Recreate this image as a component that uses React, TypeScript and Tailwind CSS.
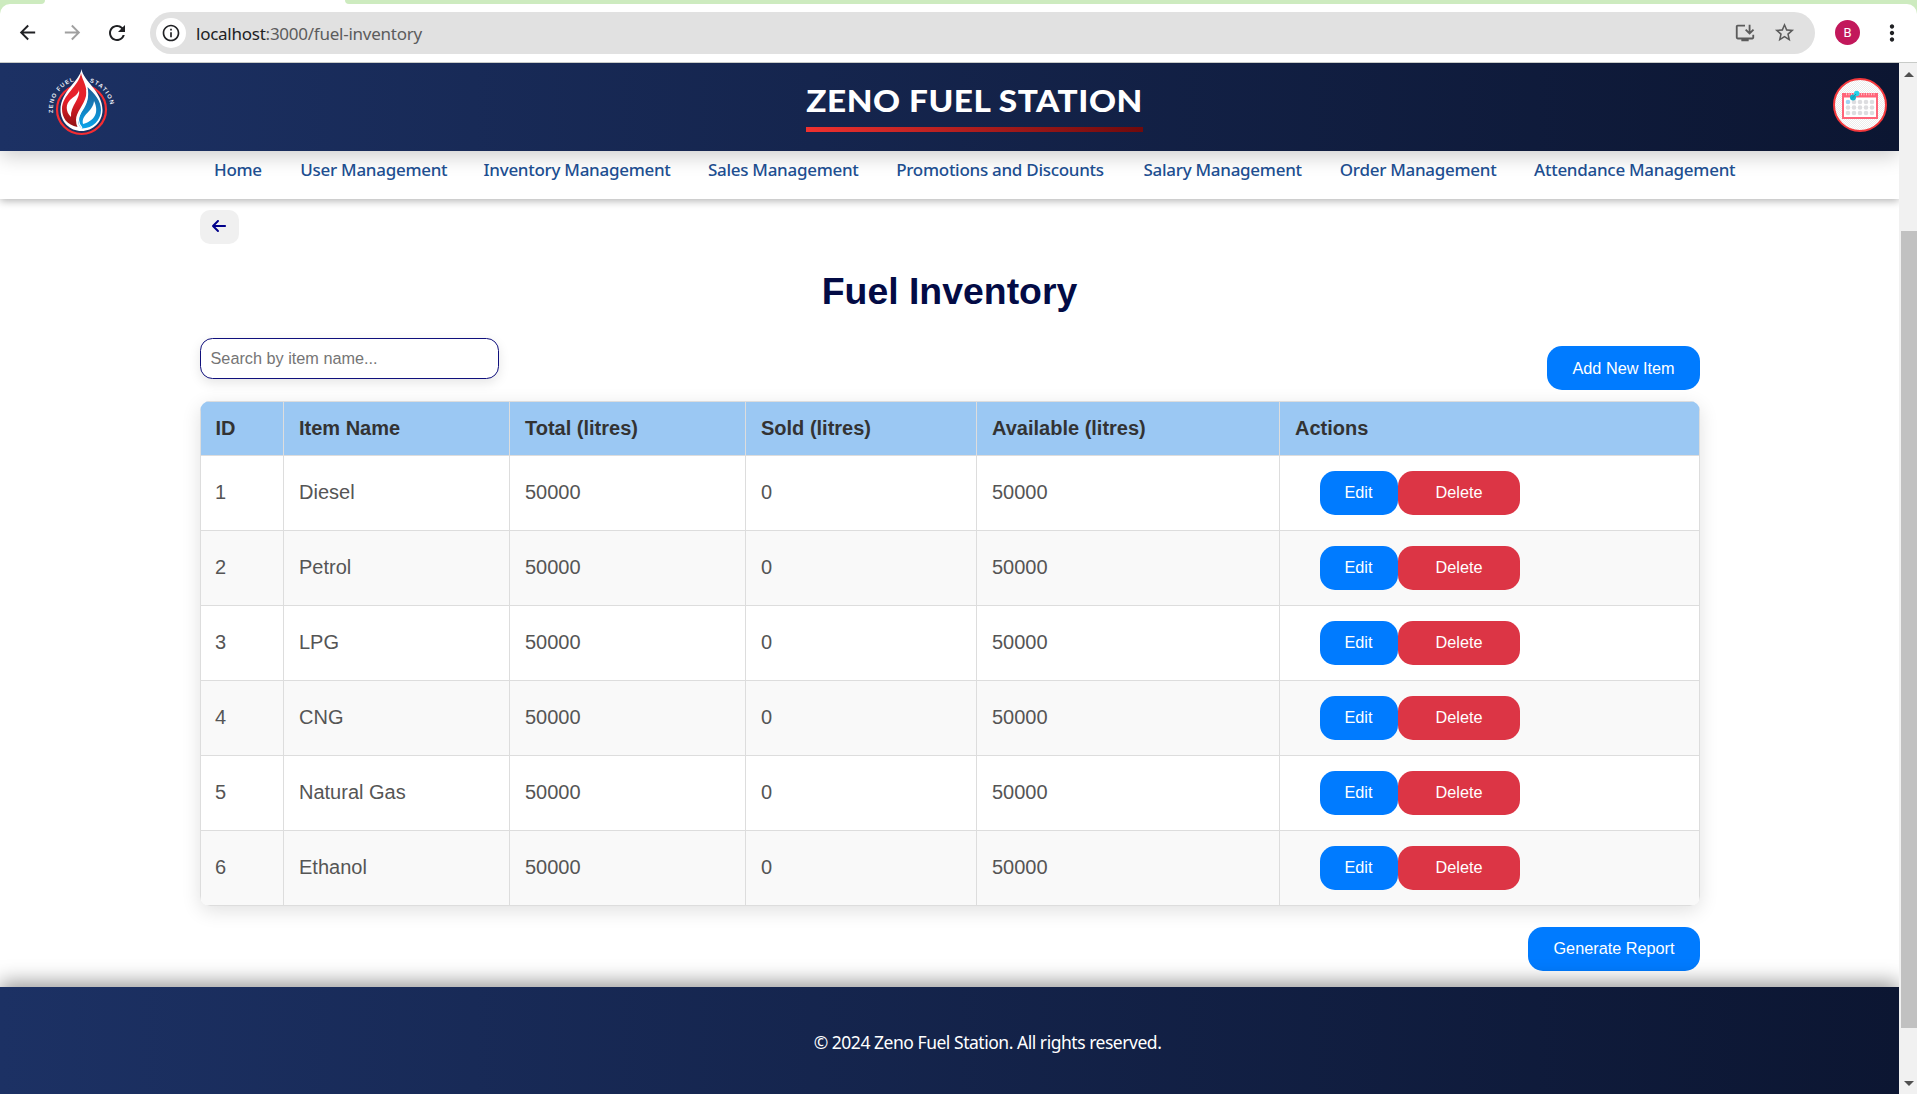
import React from "react";
import { MdArrowBack, MdArrowForward, MdRefresh, MdInfoOutline, MdInstallDesktop, MdStarBorder, MdMoreVert } from "react-icons/md";
import { FaArrowLeft } from "react-icons/fa6";

const navItems = [
  { label: "Home", box: "w-[49px]" },
  { label: "User Management", box: "w-[146px]" },
  { label: "Inventory Management", box: "w-[187px]" },
  { label: "Sales Management", box: "w-[151px]" },
  { label: "Promotions and Discounts", box: "w-[210px]" },
  { label: "Salary Management", box: "w-[159px]" },
  { label: "Order Management", box: "w-[157px]" },
  { label: "Attendance Management", box: "w-[202px]" },
];

const columns = ["ID", "Item Name", "Total (litres)", "Sold (litres)", "Available (litres)", "Actions"];
const items = ["Diesel", "Petrol", "LPG", "CNG", "Natural Gas", "Ethanol"];

function BrowserBar() {
  return (
    <div className="h-[63px] shrink-0 bg-[#cdebbf]">
      <div className="flex h-1 bg-white">
        <div className="w-[45px] rounded-br-full bg-[#cdebbf]" />
        <div className="w-[300px]" />
        <div className="flex-1 rounded-bl-full bg-[#cdebbf]" />
      </div>
      <div className="flex h-[59px] items-center rounded-t-[10px] border-b border-[#c8cbc8] bg-white pb-px">
        <MdArrowBack className="ml-[16px] size-[23px] text-[#202124]" />
        <MdArrowForward className="ml-[22px] size-[23px] text-[#a0a0a0]" />
        <MdRefresh className="ml-[21px] size-[24px] text-[#202124]" />
        <div className="ml-[21px] flex h-[42px] w-[1665px] items-center rounded-full bg-[#e1e1e1] pl-[6px] pr-[19px]">
          <div className="flex size-[30px] items-center justify-center rounded-full bg-white">
            <MdInfoOutline className="size-[20px] text-[#202124]" />
          </div>
          <div className="ml-[10px] pt-[2px] font-['Noto_Sans'] text-[17px] tracking-[-0.250px] text-[#5c5c5c]">
            <span className="text-[#202124]">localhost</span>:3000/fuel-inventory
          </div>
          <div className="flex-1" />
          <MdInstallDesktop className="size-[22px] text-[#5b5b5b]" />
          <MdStarBorder className="ml-[17px] size-[23px] text-[#5b5b5b]" />
        </div>
        <div className="ml-[20px] flex size-[25px] items-center justify-center rounded-full bg-[#c2185b] font-['Roboto'] text-[13px] text-white">B</div>
        <MdMoreVert className="ml-[19px] size-[26px] text-[#202124]" />
      </div>
    </div>
  );
}

function Logo() {
  return (
    <svg className="mb-[10px] ml-[45px] h-[76px] w-[74px]" viewBox="45 65 74 76">
      <defs>
        <path id="arcLeft" d="M53 114 A29.500 29.500 0 0 1 75 82" />
        <path id="arcRight" d="M89.500 83 A29.500 29.500 0 0 1 110.500 107" />
        <linearGradient id="flameRed" x1="0" y1="0" x2="0" y2="1">
          <stop offset="0" stopColor="#e2262b" />
          <stop offset="0.5" stopColor="#e8202a" />
          <stop offset="1" stopColor="#8f1215" />
        </linearGradient>
        <linearGradient id="flameBlue" x1="0" y1="0" x2="0" y2="1">
          <stop offset="0" stopColor="#1d5c93" />
          <stop offset="1" stopColor="#0aa4ea" />
        </linearGradient>
      </defs>
      <circle cx="81.5" cy="110.500" r="24.500" fill="none" stroke="#f52d32" strokeWidth="2.200" />
      <path d="M81.5 70 C83 82 102.500 92 102.500 111 C102.500 123 93 132 81.500 132 C70 132 60.500 123 60.500 111 C60.500 92 80 82 81.500 70Z" fill="#fff" />
      <path d="M81 74 C82 81 88 87 86 97 C84 106 76 113 76 121 Q76 125 77.500 128 C67 126 62 119 62 110 C62 96 79 87 81 74Z" fill="url(#flameRed)" />
      <path d="M79 91 C81 99 70 107 71 118 C65 112 66 105 70 101 C74 97 78 96 79 91Z" fill="#fff" />
      <path d="M87.500 88 C95 95 101 102 101 111 C101 121 93 129.500 82 129.500 C76 125 78 118 83 111 C87 105 89.500 98 87.500 88Z" fill="url(#flameBlue)" />
      <path d="M94 102 C98 110 98 121 83 125 C81 115 93 113 94 102Z" fill="#fff" />
      <path d="M87 91 C90 104 78 112 78.500 121 Q79 126 82 129" fill="none" stroke="#fff" strokeWidth="1.200" />
      <g fill="#eef1fa" fontFamily="Liberation Sans" fontWeight="bold" fontSize="5.800">
        <text><textPath href="#arcLeft" textLength="41">ZENO FUEL</textPath></text>
        <text><textPath href="#arcRight" textLength="32">STATION</textPath></text>
      </g>
    </svg>
  );
}

function CalendarBadge() {
  return (
    <svg className="mb-[4px] size-[54px]" viewBox="0 0 54 54">
      <defs>
        <pattern id="checks" width="2" height="2" patternUnits="userSpaceOnUse">
          <rect width="2" height="2" fill="#fff" />
          <rect width="1" height="1" fill="#ececec" />
          <rect x="1" y="1" width="1" height="1" fill="#ececec" />
        </pattern>
      </defs>
      <circle cx="27" cy="27" r="26" fill="url(#checks)" stroke="#f4383c" strokeWidth="2" />
      <rect x="9" y="15" width="36" height="26" fill="#ff6479" />
      <rect x="11" y="19.500" width="32" height="19.500" fill="#fff" />
      <path d="M13 16.200H42" stroke="#ffc3ca" strokeWidth="2" strokeDasharray="1 1.500" />
      {[24, 29.5, 35].map((y) =>
        [15, 21, 27, 33, 39].map((x) => (
          <circle key={x + "-" + y} cx={x} cy={y} r="2.300" fill={x === 15 && y === 24 ? "#9fd3f2" : "#dddde0"} />
        ))
      )}
      <circle cx="20" cy="19.500" r="3" fill="#12b3cc" />
      <circle cx="23.700" cy="15.500" r="2.700" fill="#27d3ea" />
      <path d="M19 20.500L23 16" stroke="#0d9bb5" strokeWidth="1" />
    </svg>
  );
}

function BlueButton({ children, className }: { children: React.ReactNode; className: string }) {
  return (
    <button className={"h-[44px] rounded-[15px] bg-[#007bff] text-[16.250px] text-white " + className}>{children}</button>
  );
}

export default function App() {
  return (
    <div className="flex h-[1094px] w-[1917px] flex-col overflow-hidden bg-white font-['Liberation_Sans',sans-serif]">
      <BrowserBar />
      <div className="flex min-h-0 flex-1">
        <div className="flex w-[1899px] flex-col overflow-hidden">
          <header className="relative z-20 flex h-[88px] shrink-0 items-center justify-between bg-linear-to-r from-[#1c3164] to-[#0c1632] pr-[12px] shadow-[0_5px_19px_rgba(0,0,0,0.2)]">
            <Logo />
            <div className="ml-[-3px] flex h-full w-[337px] flex-col items-center">
              <h1 className="mt-[18px] h-[46px] scale-x-[1.075] whitespace-nowrap font-['Lato'] text-[31px] leading-[39px] font-black tracking-[0.5px] text-white">ZENO FUEL STATION</h1>
              <div className="h-[5px] w-full bg-linear-to-r from-[#f0312f] to-[#700a0c]" />
            </div>
            <CalendarBadge />
          </header>

          <nav className="relative z-10 flex h-[48px] shrink-0 gap-[37.300px] bg-white pl-[214px] shadow-[0_2px_8px_rgba(0,0,0,0.3)]">
            {navItems.map((item) => (
              <a key={item.label} className={"mt-[7px] h-[24px] whitespace-nowrap font-['Noto_Sans'] text-[17px] leading-[24px] font-medium tracking-[-0.280px] text-[#214f92] " + item.box}>
                {item.label}
              </a>
            ))}
          </nav>

          <main className="ml-[200px] h-[788px] w-[1500px] shrink-0">
            <button className="mt-[11px] flex h-[34px] w-[39px] items-center justify-center rounded-[10px] bg-[#f0f0f0] pr-px pb-[2px] text-[#00008b]">
              <FaArrowLeft className="size-[16px]" />
            </button>
            <h2 className="mt-[25px] pr-px text-center text-[37.400px] leading-[44px] font-bold text-[#030b45]">Fuel Inventory</h2>
            <div className="mt-[25px] flex h-[63px] justify-between">
              <input
                className="h-[41px] w-[299px] rounded-[12.500px] border border-[#10107c] bg-white px-[9.500px] pb-px text-[16.250px] shadow-[0_4px_12px_rgba(0,0,0,0.1)] placeholder:text-[#757575]"
                placeholder="Search by item name..."
              />
              <BlueButton className="mt-[8px] w-[153px]">Add New Item</BlueButton>
            </div>
            <div className="overflow-hidden rounded-[10px] shadow-[0_5px_19px_rgba(0,0,0,0.12)]">
              <table className="w-full table-fixed border-separate border-spacing-0 text-left text-[20px]">
                <colgroup>
                  <col className="w-[84px]" />
                  <col className="w-[226px]" />
                  <col className="w-[236px]" />
                  <col className="w-[231px]" />
                  <col className="w-[303px]" />
                  <col className="w-[420px]" />
                </colgroup>
                <thead>
                  <tr className="h-[55px] bg-[#9bc8f3] text-[#333]">
                    {columns.map((c) => (
                      <th key={c} className="border-y border-r border-[#ddd] px-[15px] pt-0 pb-[2px] font-bold first:border-l first:pl-[14.500px]">{c}</th>
                    ))}
                  </tr>
                </thead>
                <tbody>
                  {items.map((name, i) => (
                    <tr key={name} className="h-[75px] bg-white text-[#555] even:bg-[#f9f9f9] [&>td]:border-r [&>td]:border-b [&>td]:border-[#ddd] [&>td]:px-[15px] [&>td]:pt-0 [&>td]:pb-[2px]">
                      <td className="border-l">
                        <span className="-ml-px">{i + 1}</span>
                      </td>
                      <td>{name}</td>
                      <td>50000</td>
                      <td>0</td>
                      <td>50000</td>
                      <td>
                        <div className="mt-[2px] flex pl-[25px]">
                          <BlueButton className="w-[78px] pr-px pb-px">Edit</BlueButton>
                          <button className="h-[44px] w-[122px] rounded-[15px] bg-[#dc3545] pb-px text-[16.250px] text-white">Delete</button>
                        </div>
                      </td>
                    </tr>
                  ))}
                </tbody>
              </table>
            </div>
            <div className="mt-[21px] flex justify-end">
              <BlueButton className="w-[172px] pb-px">Generate Report</BlueButton>
            </div>
          </main>

          <footer className="flex flex-1 items-center justify-center bg-linear-to-r from-[#1c3164] to-[#0c1632] pl-[76px] font-['Noto_Sans'] text-[17.500px] tracking-[-0.470px] text-white shadow-[0_-5px_19px_rgba(0,0,0,0.4)]">
            <p className="mt-[3px]">© 2024 Zeno Fuel Station. All rights reserved.</p>
          </footer>
        </div>

        <div className="flex w-[18px] flex-col items-center bg-[#f1f1f1] pl-[2px]">
          <div className="mt-[9px] h-0 w-0 border-x-[5px] border-b-[5px] border-x-transparent border-b-[#505050]" />
          <div className="mt-[154px] h-[797px] w-full bg-[#c1c1c1]" />
          <div className="mt-[53px] h-0 w-0 border-x-[5px] border-t-[5px] border-x-transparent border-t-[#505050]" />
        </div>
      </div>
    </div>
  );
}
